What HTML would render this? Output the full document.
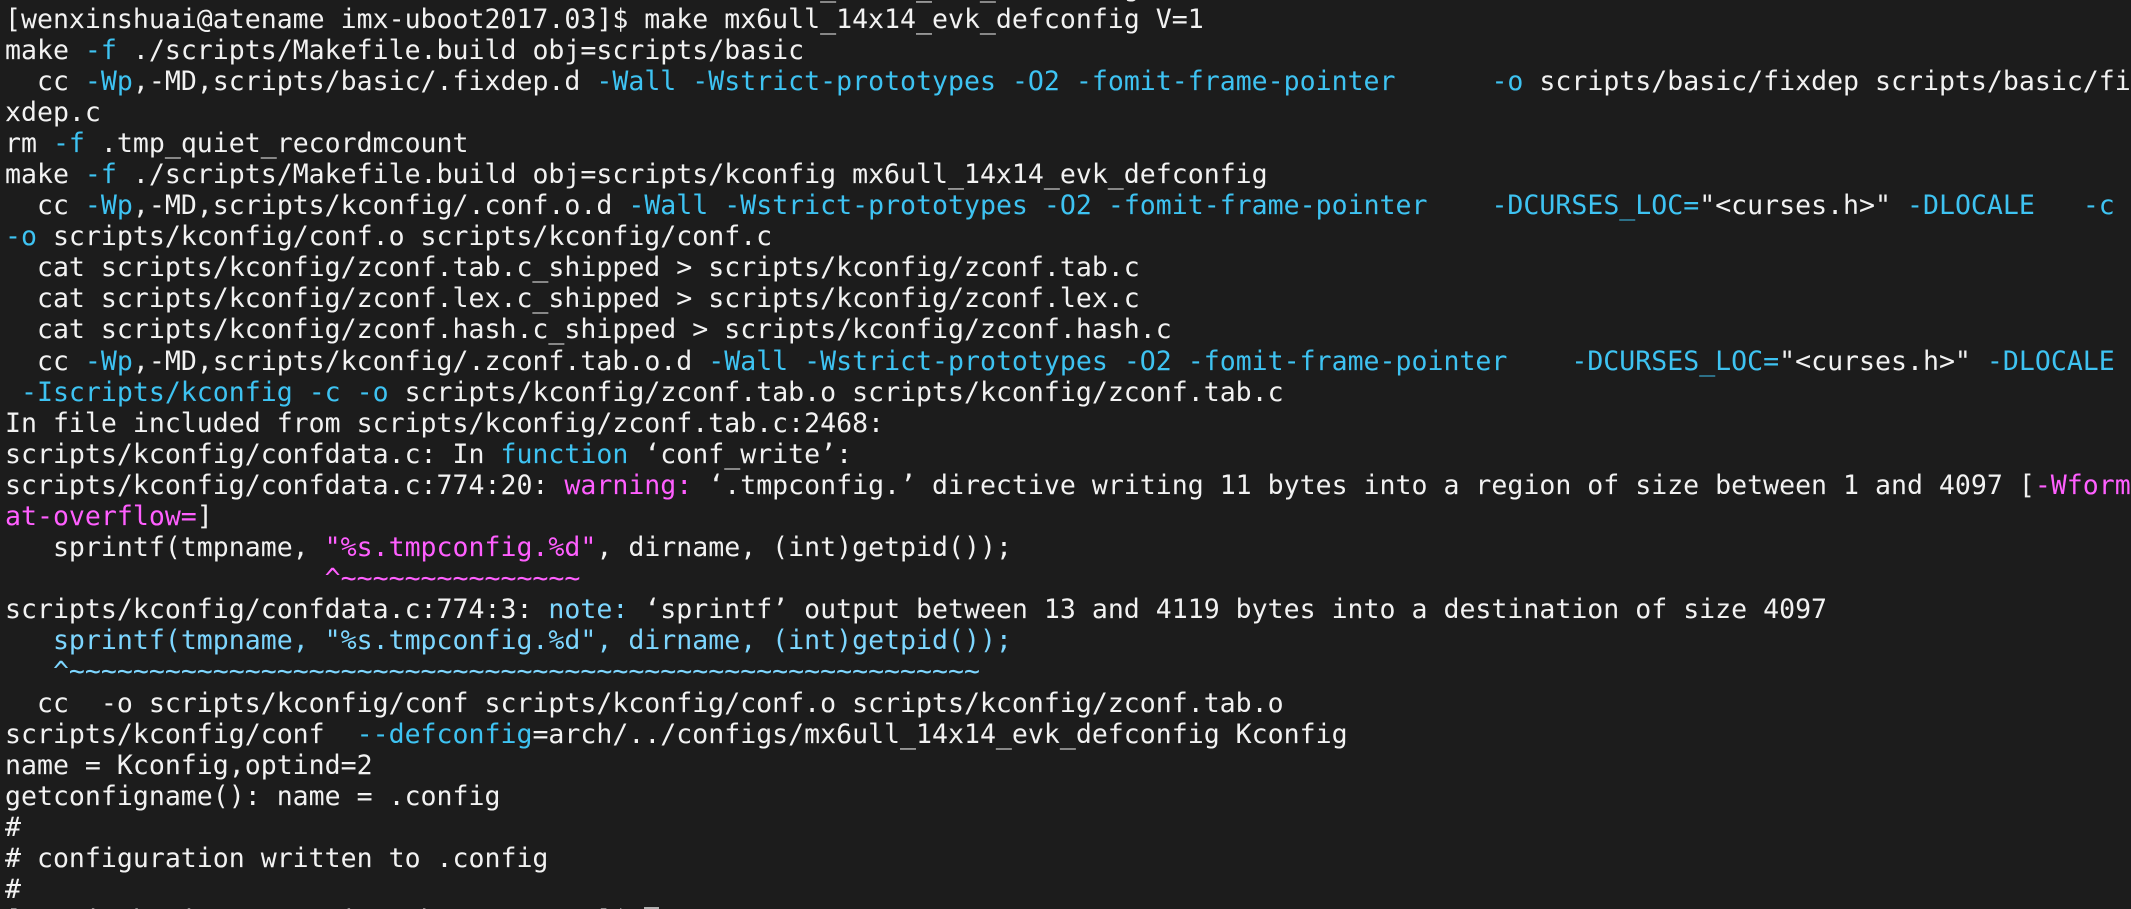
<!DOCTYPE html>
<html><head><meta charset="utf-8"><style>
html,body{margin:0;padding:0;background:#1c1c1c;width:2131px;height:909px;overflow:hidden}
#w{position:relative;width:2131px;height:909px;overflow:hidden}
pre{position:absolute;left:5px;top:-27.6px;margin:0;font-family:"DejaVu Sans Mono","Liberation Mono",monospace;font-size:26.55px;line-height:31.1px;color:#f2f2f2;white-space:pre}
.c{color:#3ec3f2}.m{color:#ff5fff}.l{color:#7dd6ff}
.cur{display:inline-block;width:15px;height:28px;background:#b0b0b0;vertical-align:top;margin-top:2px}
</style></head><body><div id="w"><pre>[wenxinshuai@atename imx-uboot2017.03]$ make mx6ull_14x14_evk_defconfig V=1
[wenxinshuai@atename imx-uboot2017.03]$ make mx6ull_14x14_evk_defconfig V=1
make <span class="c">-f</span> ./scripts/Makefile.build obj=scripts/basic
  cc <span class="c">-Wp</span>,-MD,scripts/basic/.fixdep.d <span class="c">-Wall</span> <span class="c">-Wstrict-prototypes</span> <span class="c">-O2</span> <span class="c">-fomit-frame-pointer</span>      <span class="c">-o</span> scripts/basic/fixdep scripts/basic/fi
xdep.c
rm <span class="c">-f</span> .tmp_quiet_recordmcount
make <span class="c">-f</span> ./scripts/Makefile.build obj=scripts/kconfig mx6ull_14x14_evk_defconfig
  cc <span class="c">-Wp</span>,-MD,scripts/kconfig/.conf.o.d <span class="c">-Wall</span> <span class="c">-Wstrict-prototypes</span> <span class="c">-O2</span> <span class="c">-fomit-frame-pointer</span>    <span class="c">-DCURSES_LOC=</span>"&lt;curses.h&gt;" <span class="c">-DLOCALE</span>   <span class="c">-c</span>
<span class="c">-o</span> scripts/kconfig/conf.o scripts/kconfig/conf.c
  cat scripts/kconfig/zconf.tab.c_shipped &gt; scripts/kconfig/zconf.tab.c
  cat scripts/kconfig/zconf.lex.c_shipped &gt; scripts/kconfig/zconf.lex.c
  cat scripts/kconfig/zconf.hash.c_shipped &gt; scripts/kconfig/zconf.hash.c
  cc <span class="c">-Wp</span>,-MD,scripts/kconfig/.zconf.tab.o.d <span class="c">-Wall</span> <span class="c">-Wstrict-prototypes</span> <span class="c">-O2</span> <span class="c">-fomit-frame-pointer</span>    <span class="c">-DCURSES_LOC=</span>"&lt;curses.h&gt;" <span class="c">-DLOCALE</span>
 <span class="c">-Iscripts/kconfig</span> <span class="c">-c</span> <span class="c">-o</span> scripts/kconfig/zconf.tab.o scripts/kconfig/zconf.tab.c
In file included from scripts/kconfig/zconf.tab.c:2468:
scripts/kconfig/confdata.c: In <span class="c">function</span> ‘conf_write’:
scripts/kconfig/confdata.c:774:20: <span class="m">warning:</span> ‘.tmpconfig.’ directive writing 11 bytes into a region of size between 1 and 4097 [<span class="m">-Wform</span>
<span class="m">at-overflow=</span>]
   sprintf(tmpname, <span class="m">"%s.tmpconfig.%d"</span>, dirname, (int)getpid());
                    <span class="m">^~~~~~~~~~~~~~~~</span>
scripts/kconfig/confdata.c:774:3: <span class="l">note:</span> ‘sprintf’ output between 13 and 4119 bytes into a destination of size 4097
   <span class="l">sprintf(tmpname, "%s.tmpconfig.%d", dirname, (int)getpid());</span>
   <span class="l">^~~~~~~~~~~~~~~~~~~~~~~~~~~~~~~~~~~~~~~~~~~~~~~~~~~~~~~~~~</span>
  cc  -o scripts/kconfig/conf scripts/kconfig/conf.o scripts/kconfig/zconf.tab.o
scripts/kconfig/conf  <span class="c">--defconfig</span>=arch/../configs/mx6ull_14x14_evk_defconfig Kconfig
name = Kconfig,optind=2
getconfigname(): name = .config
#
# configuration written to .config
#
[wenxinshuai@atename imx-uboot2017.03]$ <span class="cur"></span></pre></div></body></html>
